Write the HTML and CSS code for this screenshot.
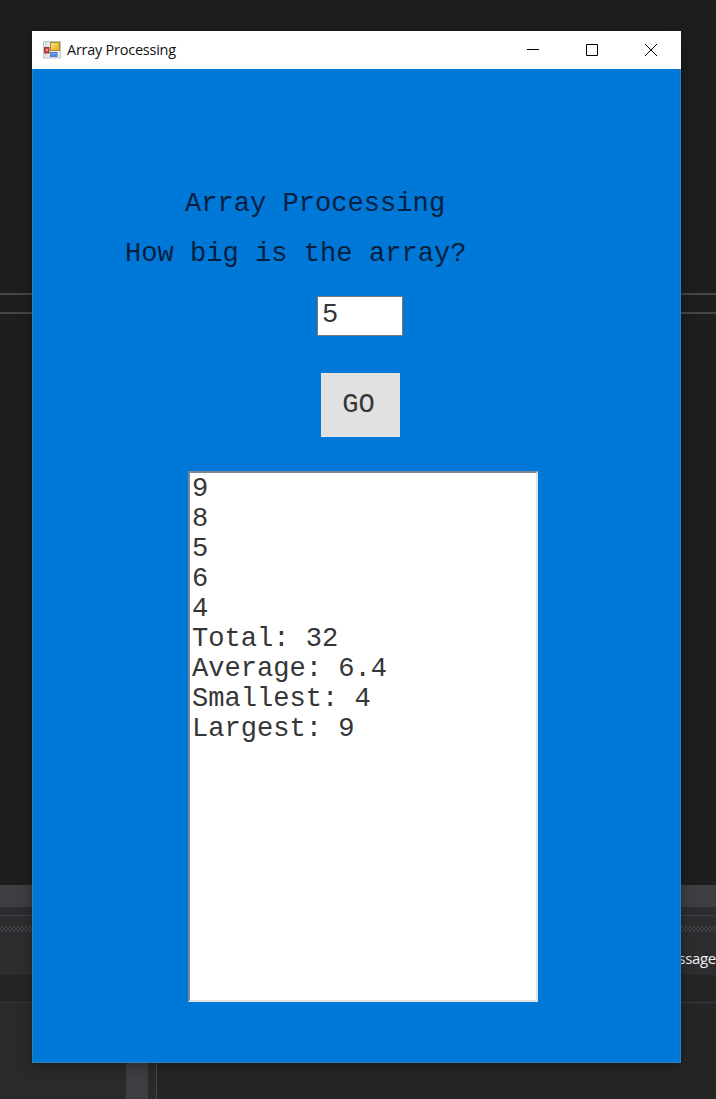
FILE: index.html
```html
<!DOCTYPE html>
<html lang="en">
<head>
<meta charset="utf-8">
<title>Array Processing</title>
<link rel="stylesheet" href="styles.css">
</head>
<body>
<div class="desktop">
  <div class="editor"><div class="split"></div></div>
  <div class="bar"></div>
  <div class="panel-head"><div class="grip"></div></div>
  <div class="columns"><span>ssage</span></div>
  <div class="panel-foot"><div class="foot-left"></div><div class="foot-scroll"></div><div class="foot-right"></div></div>
</div>
<main class="window">
  <header class="titlebar">
    <svg class="app-icon" width="18" height="18" viewBox="0 0 18 18">
      <defs>
        <linearGradient id="gold" x2="1" y2="1"><stop stop-color="#ffe88a"/><stop offset="1" stop-color="#d9a514"/></linearGradient>
        <linearGradient id="blue" x2="0" y2="1"><stop stop-color="#8db8f5"/><stop offset="1" stop-color="#3c70cf"/></linearGradient>
      </defs>
      <rect x=".5" y=".5" width="17" height="16.500" fill="#e4eae9" stroke="#bac6c4"/>
      <path d="M1 11.500h6M3 1v16M12 11v6" stroke="#cdd6d5"/>
      <rect x="1.500" y="6.500" width="4.500" height="5.500" fill="#c4474a" stroke="#a8383b"/>
      <rect x="3" y="8" width="2" height="2" fill="#ed9b96"/>
      <rect x="7.500" y="1.500" width="9" height="8" fill="url(#gold)" stroke="#b38b2a"/>
      <rect x="7.500" y="11.500" width="6.500" height="4" fill="url(#blue)" stroke="#5680ce"/>
    </svg>
    <h1 class="title">Array Processing</h1>
    <div class="controls">
      <svg width="12" height="12" viewBox="0 0 12 12"><path d="M0 5.500h12"/></svg>
      <svg width="12" height="12" viewBox="0 0 12 12"><path d="M.5.5h11v11H.5z"/></svg>
      <svg width="12" height="12" viewBox="0 0 12 12"><path d="M0 0l12 12M12 0L0 12"/></svg>
    </div>
  </header>
  <section class="form">
    <div class="heading">Array Processing</div>
    <label class="question" for="size">How big is the array?</label>
    <input class="size" id="size" value="5">
    <button class="go">GO</button>
    <div class="list">
      <div>9</div>
      <div>8</div>
      <div>5</div>
      <div>6</div>
      <div>4</div>
      <div>Total: 32</div>
      <div>Average: 6.4</div>
      <div>Smallest: 4</div>
      <div>Largest: 9</div>
    </div>
  </section>
</main>
</body>
</html>
```
FILE: styles.css
```css
* { box-sizing: border-box; }
body { margin: 0; width: 716px; height: 1099px; overflow: hidden; position: relative; background: #1e1e1e; }

.desktop { display: flex; flex-direction: column; height: 1099px; }
.editor { height: 885px; padding-top: 293px; }
.split { height: 21px; border-top: 2px solid #464646; border-bottom: 2px solid #464646; }
.bar { height: 22px; background: #3e3e42; }
.panel-head { height: 37px; padding-top: 8px; background: #2d2d30; }
.grip {
  height: 19px;
  border-top: 1px solid #3f3f46;
  background: radial-gradient(circle, #404045 .7px, transparent 1px) 0 9px / 4px 4px repeat-x,
    radial-gradient(circle, #404045 .7px, transparent 1px) 2px 11px / 4px 4px repeat-x,
    radial-gradient(circle, #404045 .7px, transparent 1px) 0 13px / 4px 4px repeat-x;
}
.columns {
  display: flex; justify-content: flex-end; height: 59px; padding-top: 3px;
  background: linear-gradient(#2d2d30 31px, #252526 31px, #252526 58px, #38383b 58px);
  color: #f1f1f1; font: 15px/22px "Open Sans", sans-serif; letter-spacing: -.3px;
}
.panel-foot { display: flex; flex: 1; background: #252526; }
.foot-left { width: 126px; background: #2a2a2b; }
.foot-scroll { width: 22px; background: #3e3e42; }
.foot-right { width: 9px; background: #2a2a2d; border-right: 1px solid #48484c; }

.window {
  position: absolute; left: 32px; top: 31px; width: 649px; height: 1032px;
  display: flex; flex-direction: column; background: #0078d7;
  box-shadow: 0 3px 12px rgba(0, 0, 0, .35);
}
.titlebar { display: flex; align-items: center; height: 38px; padding: 0 24px 0 11px; background: #fff; }
.title { margin: 0 0 0 6px; color: #111; font: 400 14.5px/20px "Open Sans", sans-serif; letter-spacing: -.25px; }
.controls { display: flex; gap: 47px; margin-left: auto; }
.controls svg { fill: none; stroke: #000; stroke-width: 1; display: block; }

.form {
  flex: 1; display: flex; flex-direction: column; align-items: flex-start;
  padding-top: 120px; border: solid #2a83bd; border-width: 0 1px 1px;
  color: #07203f; font: 27.1px/30px "Liberation Mono", "Courier New", monospace;
}
.heading { margin-left: 152px; }
.question { margin: 20px 0 0 92px; }
.size {
  width: 86px; height: 40px; margin: 27px 0 0 284px; padding: 0 4px 3px;
  border: 1px solid #7a7a7a; background: #fff; color: #363636; font: inherit;
}
.go {
  width: 79px; height: 64px; margin: 37px 0 0 288px; padding: 0 4px 1px 0;
  border: 1px solid #e8e5e1; background: #e1e1e1; color: #363636; font: inherit;
}
.list {
  width: 350px; height: 531px; margin: 34px 0 0 155px; padding: 1px 1px 1px 2px;
  border: 2px solid; border-color: #7b8794 #e3e3e3 #e3e3e3 #7b8794;
  background: #fff; color: #363636;
}
```
